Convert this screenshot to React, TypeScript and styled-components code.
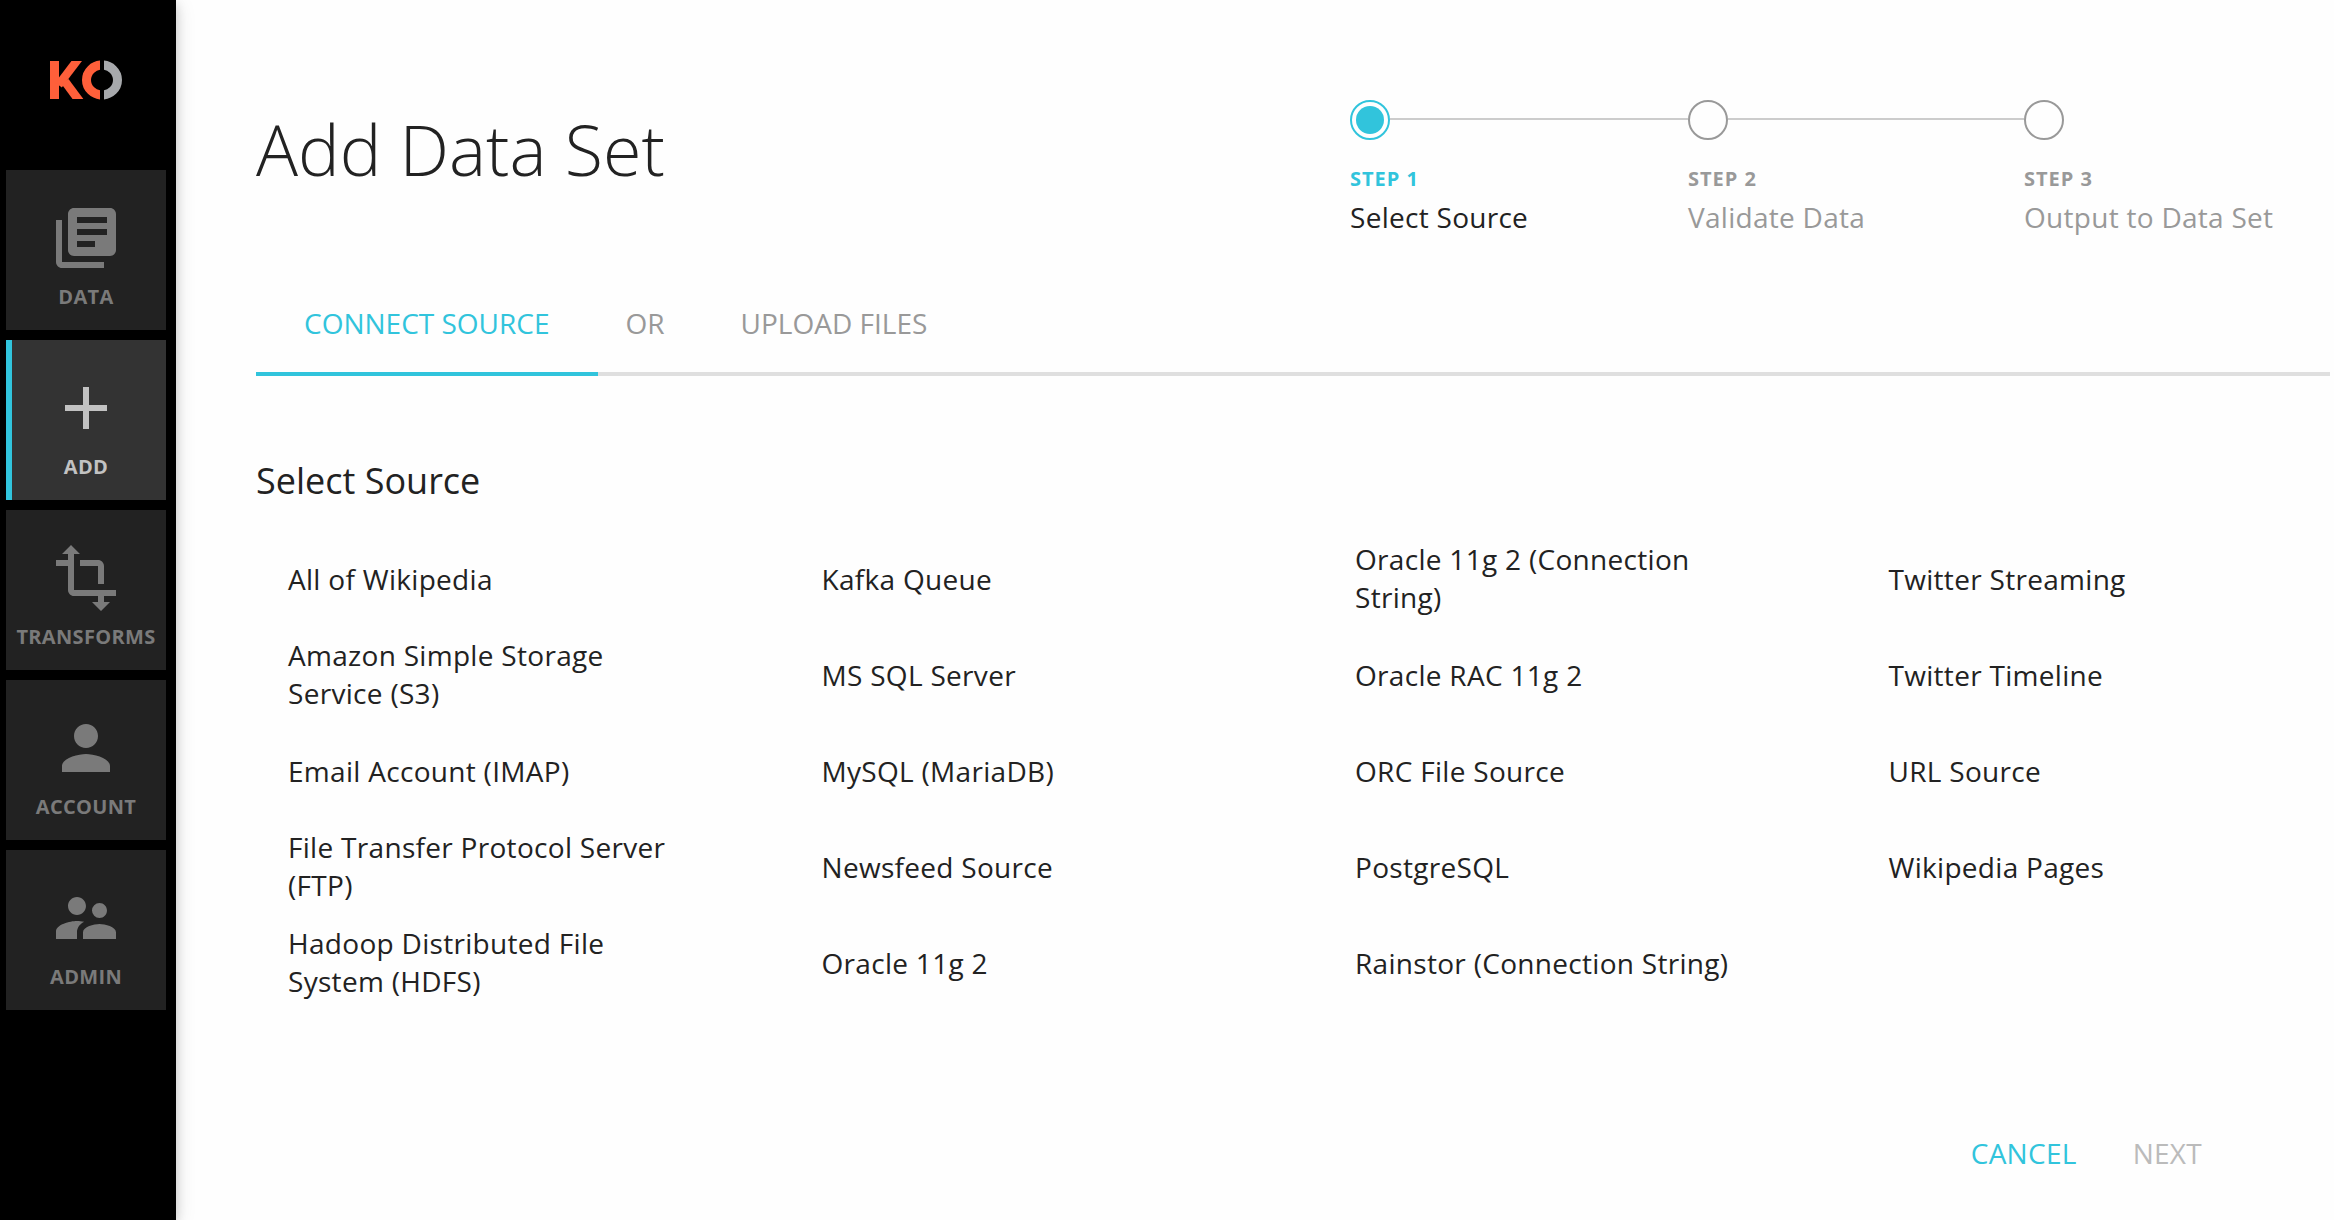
import React from "react";
import styled, { createGlobalStyle } from "styled-components";
import { MdAdd, MdLibraryBooks, MdPerson, MdSupervisorAccount, MdTransform } from "react-icons/md";
import type { IconType } from "react-icons";

const accent = "#31c4dc";
const ink = "#222222";
const muted = "#999999";

const GlobalStyle = createGlobalStyle`
  *, *::before, *::after { box-sizing: border-box; }
  html, body { margin: 0; padding: 0; background: #fefefe; overflow: hidden; }
  body {
    font-family: "Open Sans", "Noto Sans", sans-serif;
    font-size: 28px;
    line-height: 38px;
    color: ${ink};
    -webkit-font-smoothing: antialiased;
  }
`;

const Page = styled.div`
  display: flex;
  width: 100vw;
  height: 100vh;
  overflow: hidden;
  background: #fefefe;
`;

const Sidebar = styled.nav`
  flex: 0 0 176px;
  display: flex;
  flex-direction: column;
  align-items: flex-start;
  gap: 10px;
  padding-left: 6px;
  background: #000000;
  box-shadow: 0 4px 10px rgba(0, 0, 0, 0.16), 0 4px 20px rgba(0, 0, 0, 0.12);
`;

const LogoArea = styled.div`
  width: 160px;
  height: 160px;
  padding: 60px 0 0 44px;
`;

const LogoSvg = styled.svg`
  display: block;
`;

const NavItem = styled.a<{ $active: boolean }>`
  display: flex;
  flex-direction: column;
  align-items: center;
  width: 160px;
  height: 160px;
  padding-top: 32px;
  background: ${(p) => (p.$active ? "#333333" : "#222222")};
  color: ${(p) => (p.$active ? "#c2c2c2" : "#7a7a7a")};
  box-shadow: ${(p) => (p.$active ? `inset 6px 0 0 ${accent}` : "none")};

  svg {
    display: block;
    width: 72px;
    height: 72px;
  }
`;

const NavLabel = styled.span`
  margin-top: 11px;
  font-size: 20px;
  line-height: 24px;
  font-weight: 700;
  letter-spacing: 0.33px;
`;

const Main = styled.main`
  flex: 1;
  min-width: 0;
  display: flex;
  flex-direction: column;
  padding: 100px 4px 0 80px;
`;

const Header = styled.header`
  display: flex;
  justify-content: space-between;
  align-items: flex-start;
  height: 174px;
`;

const Title = styled.h1`
  margin: 1px 0 0;
  font-size: 70px;
  line-height: 96px;
  font-weight: 300;
`;

const Steps = styled.ol`
  display: grid;
  grid-template-columns: 338px 336px 1fr;
  width: 980px;
  margin: 0;
  padding: 0;
  list-style: none;
`;

const Step = styled.li`
  white-space: nowrap;
`;

const StepTrack = styled.div`
  display: flex;
  align-items: center;
  height: 40px;
`;

const StepDot = styled.span<{ $active: boolean }>`
  flex: none;
  display: flex;
  align-items: center;
  justify-content: center;
  width: 40px;
  height: 40px;
  border: 2px solid ${(p) => (p.$active ? accent : muted)};
  border-radius: 50%;

  &::after {
    content: "";
    width: 28px;
    height: 28px;
    border-radius: 50%;
    background: ${(p) => (p.$active ? accent : "transparent")};
  }
`;

const StepLine = styled.span`
  flex: 1;
  height: 2px;
  margin-bottom: 2px;
  background: #cccccc;
`;

const StepNumber = styled.div<{ $active: boolean }>`
  margin-top: 25px;
  font-size: 20px;
  line-height: 28px;
  font-weight: 700;
  letter-spacing: 1px;
  color: ${(p) => (p.$active ? accent : muted)};
`;

const StepName = styled.div<{ $active: boolean }>`
  margin-top: 5px;
  letter-spacing: 0.28px;
  color: ${(p) => (p.$active ? ink : muted)};
`;

const Tabs = styled.div`
  display: flex;
  height: 102px;
  line-height: 98px;
  color: ${muted};
`;

const Tab = styled.div<{ $active?: boolean }>`
  padding: 0 48px;
  border-bottom: 4px solid ${(p) => (p.$active ? accent : "#dfdfdf")};
  color: ${(p) => (p.$active ? accent : muted)};
`;

const TabSeparator = styled.div`
  padding: 0 28px;
  border-bottom: 4px solid #dfdfdf;
`;

const TabRule = styled.div`
  flex: 1;
  border-bottom: 4px solid #dfdfdf;
`;

const SectionTitle = styled.h2`
  margin: 80px 0 0;
  font-size: 36px;
  line-height: 50px;
  font-weight: 400;
`;

const SourceGrid = styled.ul`
  display: grid;
  grid-auto-flow: column;
  grid-template-columns: repeat(4, 533.5px);
  grid-template-rows: repeat(5, 96px);
  margin: 25px 0 0;
  padding: 0;
  list-style: none;
`;

const Source = styled.li<{ $wraps: boolean }>`
  display: flex;
  align-items: center;
  padding: 0 101px ${(p) => (p.$wraps ? "2px" : "0")} 32px;
  letter-spacing: 0.3px;
`;

const Footer = styled.footer`
  display: flex;
  justify-content: flex-end;
  gap: 56px;
  margin-top: 123px;
  padding-right: 128px;
`;

const Action = styled.button<{ $disabled?: boolean }>`
  padding: 0;
  border: 0;
  background: none;
  font: inherit;
  letter-spacing: 0.28px;
  color: ${(p) => (p.$disabled ? "#bbbbbb" : accent)};
`;

function Logo() {
  return (
    <LogoSvg width="74" height="40" viewBox="50 60 74 40" fill="none">
      <defs>
        <clipPath id="arms"><rect x="50" y="61" width="36" height="38" /></clipPath>
        <clipPath id="left"><rect x="80" y="60" width="20" height="40" /></clipPath>
        <clipPath id="right"><rect x="104" y="60" width="20" height="40" /></clipPath>
      </defs>
      <g clipPath="url(#arms)" stroke="#ff5f3a">
        <rect x="50" y="61" width="9" height="38" fill="#ff5f3a" stroke="none" />
        <line x1="80.5" y1="56" x2="58.5" y2="85" strokeWidth="8.4" />
        <line x1="65" y1="81.5" x2="80.9" y2="103" strokeWidth="8.7" />
      </g>
      <ellipse cx="102" cy="80" rx="15.5" ry="15" stroke="#ff5f3a" strokeWidth="9" clipPath="url(#left)" />
      <ellipse cx="102" cy="80" rx="15.5" ry="15" stroke="#a7a9ac" strokeWidth="9" clipPath="url(#right)" />
    </LogoSvg>
  );
}

const nav: { label: string; icon: IconType; active?: boolean }[] = [
  { label: "DATA", icon: MdLibraryBooks },
  { label: "ADD", icon: MdAdd, active: true },
  { label: "TRANSFORMS", icon: MdTransform },
  { label: "ACCOUNT", icon: MdPerson },
  { label: "ADMIN", icon: MdSupervisorAccount },
];

const steps = ["Select Source", "Validate Data", "Output to Data Set"];

const sources: { name: string; wraps?: boolean }[] = [
  { name: "All of Wikipedia" },
  { name: "Amazon Simple Storage Service (S3)", wraps: true },
  { name: "Email Account (IMAP)" },
  { name: "File Transfer Protocol Server (FTP)", wraps: true },
  { name: "Hadoop Distributed File System (HDFS)", wraps: true },
  { name: "Kafka Queue" },
  { name: "MS SQL Server" },
  { name: "MySQL (MariaDB)" },
  { name: "Newsfeed Source" },
  { name: "Oracle 11g 2" },
  { name: "Oracle 11g 2 (Connection String)", wraps: true },
  { name: "Oracle RAC 11g 2" },
  { name: "ORC File Source" },
  { name: "PostgreSQL" },
  { name: "Rainstor (Connection String)" },
  { name: "Twitter Streaming" },
  { name: "Twitter Timeline" },
  { name: "URL Source" },
  { name: "Wikipedia Pages" },
];

export default function App() {
  return (
    <Page>
      <GlobalStyle />
      <Sidebar>
        <LogoArea>
          <Logo />
        </LogoArea>
        {nav.map(({ label, icon: Icon, active }) => (
          <NavItem key={label} $active={!!active}>
            <Icon />
            <NavLabel>{label}</NavLabel>
          </NavItem>
        ))}
      </Sidebar>
      <Main>
        <Header>
          <Title>Add Data Set</Title>
          <Steps>
            {steps.map((name, i) => (
              <Step key={name}>
                <StepTrack>
                  <StepDot $active={i === 0} />
                  {i < steps.length - 1 && <StepLine />}
                </StepTrack>
                <StepNumber $active={i === 0}>STEP {i + 1}</StepNumber>
                <StepName $active={i === 0}>{name}</StepName>
              </Step>
            ))}
          </Steps>
        </Header>
        <Tabs>
          <Tab $active>CONNECT SOURCE</Tab>
          <TabSeparator>OR</TabSeparator>
          <Tab>UPLOAD FILES</Tab>
          <TabRule />
        </Tabs>
        <SectionTitle>Select Source</SectionTitle>
        <SourceGrid>
          {sources.map(({ name, wraps }) => (
            <Source key={name} $wraps={!!wraps}>{name}</Source>
          ))}
        </SourceGrid>
        <Footer>
          <Action>CANCEL</Action>
          <Action $disabled>NEXT</Action>
        </Footer>
      </Main>
    </Page>
  );
}
